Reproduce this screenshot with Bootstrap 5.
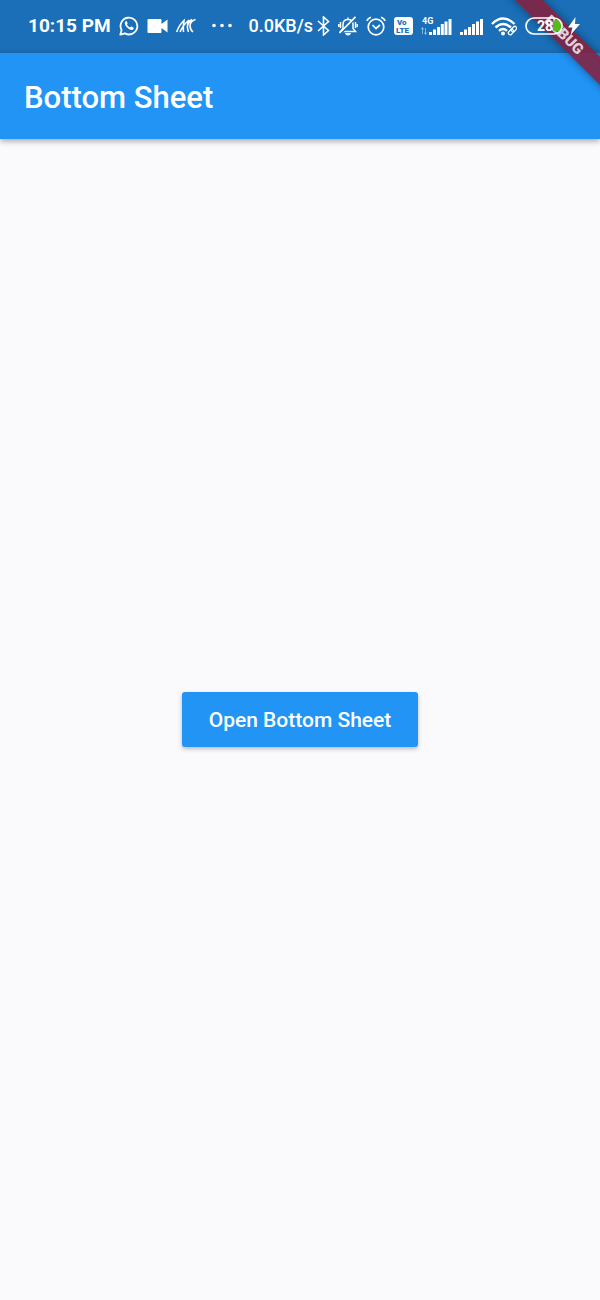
<!DOCTYPE html>
<html lang="en">
<head>
<meta charset="utf-8">
<meta name="viewport" content="width=device-width, initial-scale=1">
<title>Bottom Sheet</title>
<link href="https://cdn.jsdelivr.net/npm/bootstrap@5.3.0/dist/css/bootstrap.min.css" rel="stylesheet">
<style>
  body { font-family: Roboto, "Liberation Sans", sans-serif; background: #faf9fc; }
  .status-bar { height: 53px; background: #1a6fb8; color: #fff; font-weight: 700; padding: 0 20px 2px 28px; }
  .status-bar svg { display: block; flex: none; }
  .status-icons { position: relative; z-index: 3; }
  .clock { font-size: 19px; line-height: 28px; padding-top: 1px; }
  .speed { font-size: 18px; font-weight: 500; }
  .app-bar { height: 86px; background: #2194f5; padding: 3px 24px 0; box-shadow: 0 2px 6px rgba(0,0,0,.35); }
  .app-title { font-size: 31px; font-weight: 500; line-height: 40px; color: #fff; }
  .open-btn { --bs-btn-bg: #2194f5; --bs-btn-color: #fff; --bs-btn-hover-bg: #1d86df; --bs-btn-hover-color: #fff; --bs-btn-active-bg: #1a78c8; --bs-btn-active-color: #fff;
    border: 0; border-radius: 3px; height: 55px; padding: 2px 27px 0; font-size: 21px; font-weight: 500; box-shadow: 0 2px 4px rgba(0,0,0,.25); }
  .ribbon-corner { width: 100px; height: 100px; z-index: 2; pointer-events: none; }
  .ribbon { left: -36px; top: 25px; width: 200px; height: 20px; line-height: 20px; transform: rotate(45deg); background: rgba(135,30,58,.86); color: rgba(255,255,255,.8); font-size: 15px; font-weight: 900; box-shadow: 0 0 8px rgba(0,0,0,.4); }
</style>
</head>
<body>
<div class="min-vh-100 d-flex flex-column position-relative">
  <div class="status-bar d-flex align-items-center">
    <div class="status-icons d-flex align-items-center justify-content-between w-100 text-nowrap">
      <div class="d-flex align-items-center gap-2">
        <span class="clock">10:15 PM</span>
        <svg width="20" height="20" viewBox="0 0 20 20" fill="none" stroke="#fff" stroke-width="1.8" aria-label="WhatsApp"><path d="M1.3 18.7l1.3-4.6a8.4 8.4 0 1 1 3.3 3.3z" stroke-linejoin="round"/><path d="M6.7 5.2c-2 1.6-.4 4.500 1.500 6.400 2 2 5 3.500 6.400 1.300.5-.8.1-1.200-.5-1.500l-1.500-.8c-.6-.3-.8.2-1.500.9-1.400-.6-2.400-1.500-3.100-2.900.5-.6.8-.9.500-1.500l-.7-1.600c-.3-.6-.7-.6-1.100-.3z" fill="#fff" stroke="none"/></svg>
        <svg width="21" height="16" viewBox="0 0 21 16" fill="#fff" aria-label="Video"><path d="M1.500 1h12q1 0 1 1v4l6-4.500v13l-6-4.500v4q0 1-1 1h-12q-1 0-1-1V2q0-1 1-1z"/></svg>
        <svg width="20" height="16" viewBox="0 0 20 16" fill="none" stroke="#fff" stroke-width="1.600" aria-label="App notification"><path d="M.7 14Q3 7 8 2.500q-1 6-.5 11.500M4 14Q7 7 13 2q-3 6-.5 12M19.500 1.500q-5 1.500-5.500 6 0 4 3 6.500M16 1.500q-4 3-4.500 6"/></svg>
      </div>
      <svg width="20" height="5" viewBox="0 0 20 5" fill="#fff" aria-label="More"><circle cx="2" cy="2.500" r="1.800"/><circle cx="10" cy="2.500" r="1.800"/><circle cx="18" cy="2.500" r="1.800"/></svg>
      <div class="d-flex align-items-center gap-2">
        <div class="d-flex align-items-center gap-1">
          <span class="speed">0.0KB/s</span>
          <svg width="13" height="20" viewBox="0 0 13 20" fill="none" stroke="#fff" stroke-width="1.600" aria-label="Bluetooth"><path d="M1 5l10.500 9.500L6.500 19V1l5 4.500L1 15"/></svg>
        </div>
        <svg width="20" height="20" viewBox="0 0 20 20" fill="none" stroke="#fff" stroke-width="1.500" aria-label="Silent"><path d="M2.500 15.500h15l-2.500-3V8.500Q15 3.500 10 3.500T5 8.500v4zM10 1.500v2M2.500 6v6M.7 8v3M17.500 6v6M19.300 8v3"/><path d="M3 17.500L18 1.500" stroke="#1a6fb8" stroke-width="2"/><path d="M1.500 17L17.500 .8" stroke-width="1.700"/><path d="M7 17h6q-.5 2.500-3 2.500T7 17z" fill="#fff" stroke="none"/></svg>
        <svg width="20" height="20" viewBox="0 0 20 20" fill="none" stroke="#fff" stroke-width="1.700" aria-label="Alarm"><circle cx="10" cy="11" r="7.800"/><path d="M.8 4.800Q2 2.200 5 1.200M19.200 4.800Q18 2.200 15 1.200M6.500 9l3.500 3.500 4-3.500"/></svg>
        <svg width="19" height="18" viewBox="0 0 19 18" aria-label="VoLTE"><rect width="19" height="18" rx="3" fill="#fff"/><g fill="#1a6fb8" font-family="Roboto, sans-serif" font-weight="900"><text x="3" y="8" font-size="8">Vo</text><text x="2" y="16" font-size="8">LTE</text></g></svg>
        <svg width="31" height="20" viewBox="1 0 31 20" fill="#fff" aria-label="4G signal"><text x="2" y="8" font-size="9" font-weight="700" font-family="Roboto, sans-serif">4G</text><path d="M9 16h3v3H9zM13 13.500h3V19h-3zM17 11h3v8h-3zM20.800 8h3v11h-3zM24.500 5.500h3V19h-3zM28.500 3h3v16h-3z"/><path d="M2.500 18v-6M1 13.500l1.500-2 1 2M5.500 12v6M4.500 16.500l1 2 1.500-2" fill="none" stroke="#fff" stroke-opacity=".45"/></svg>
        <svg width="23" height="20" viewBox="0 0 23 20" fill="#fff" aria-label="Signal"><path d="M0 16h3v3H0zM4 13.500h3V19H4zM8 11h3v8H8zM12 8h3v11h-3zM16 5.500h3V19h-3zM20 3h3v16h-3z"/></svg>
        <svg width="26" height="20" viewBox="0 0 26 20" fill="none" stroke="#fff" stroke-width="2.400" aria-label="Wi-Fi"><path d="M1 8Q12 -3 23.500 8M4.500 11.500Q12 4.500 20 11.500M8 14.800q4-3.500 8 0"/><circle cx="12" cy="17.500" r="2" fill="#fff" stroke="none"/><g stroke-width="1.300"><rect x="17" y="14.300" width="6" height="3.600" rx="1.800" transform="rotate(-48 20 16.100)"/><rect x="20" y="11.300" width="6" height="3.600" rx="1.800" transform="rotate(-48 23 13.100)"/></g></svg>
        <div class="d-flex align-items-center gap-1">
          <svg width="39" height="18" viewBox="0 0 39 18" aria-label="Battery 28%"><path d="M28 4.500q2-2 4-1.500a5.500 5.500 0 0 1 0 11.500q-2 .5-4-1.500z" fill="#55b920"/><rect x="1" y="1" width="36" height="16" rx="8" fill="none" stroke="#fff" stroke-width="1.600"/><text x="12" y="14" font-size="14" font-weight="700" fill="#fff" font-family="Roboto, sans-serif">28</text></svg>
          <svg width="12" height="18" viewBox="0 0 12 18" fill="#fff" aria-label="Charging"><path d="M7.500 0L0 10.500h4.500L2.500 18 12 7H7z"/></svg>
        </div>
      </div>
    </div>
  </div>

  <header class="app-bar d-flex align-items-center">
    <h1 class="app-title m-0">Bottom Sheet</h1>
  </header>

  <main class="flex-grow-1 d-flex align-items-center justify-content-center">
    <button type="button" class="btn open-btn">Open Bottom Sheet</button>
  </main>

  <div class="ribbon-corner position-absolute top-0 end-0 overflow-hidden">
    <div class="ribbon position-absolute text-center">DEBUG</div>
  </div>
</div>
<script src="https://cdn.jsdelivr.net/npm/bootstrap@5.3.0/dist/js/bootstrap.bundle.min.js"></script>
</body>
</html>
